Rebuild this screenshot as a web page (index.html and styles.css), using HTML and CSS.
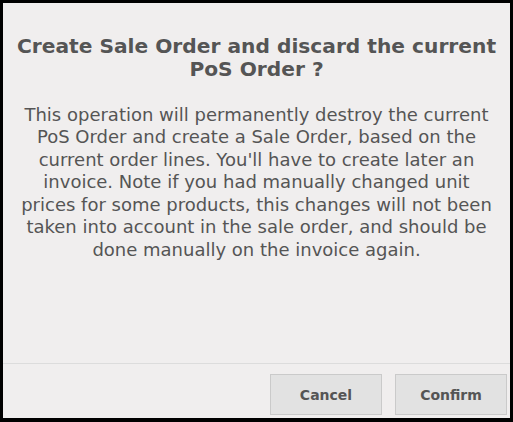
FILE: index.html
```html
<!DOCTYPE html>
<html>
<head>
<meta charset="utf-8">
<link rel="stylesheet" href="styles.css">
</head>
<body>
<div class="popup">
  <header class="title">Create Sale Order and discard the current PoS Order ?</header>
  <main class="body">This operation will permanently destroy the current PoS Order and create a Sale Order, based on the current order lines. You'll have to create later an invoice. Note if you had manually changed unit prices for some products, this changes will not been taken into account in the sale order, and should be done manually on the invoice again.</main>
  <footer class="footer">
    <div class="button">Cancel</div>
    <div class="button">Confirm</div>
  </footer>
</div>
</body>
</html>
```

FILE: styles.css
```css
html, body {
  margin: 0;
  padding: 0;
  background: #000;
  width: 513px;
  height: 422px;
  overflow: hidden;
}
body {
  display: flex;
  padding: 3px 3px 4px 3px;
  box-sizing: border-box;
}
.popup {
  flex: 1;
  display: flex;
  flex-direction: column;
  background: #f0eeee;
  color: #555555;
  font-family: "DejaVu Sans", sans-serif;
  text-align: center;
}
.title {
  font-size: 20.2px;
  font-weight: bold;
  line-height: 23.3px;
  padding: 32px 6px 0;
}
.body {
  font-size: 18px;
  line-height: 22.5px;
  padding: 22px 16px 0;
  flex: 1;
}
.footer {
  border-top: 1px solid #dcdcdc;
  display: flex;
  justify-content: flex-end;
  gap: 13px;
  padding: 10px 3px 3px 0;
}
.button {
  width: 110px;
  height: 39px;
  line-height: 40px;
  background: #e2e2e2;
  border: 1px solid #cacaca;
  font-size: 14px;
  font-weight: bold;
  color: #555555;
}
```
